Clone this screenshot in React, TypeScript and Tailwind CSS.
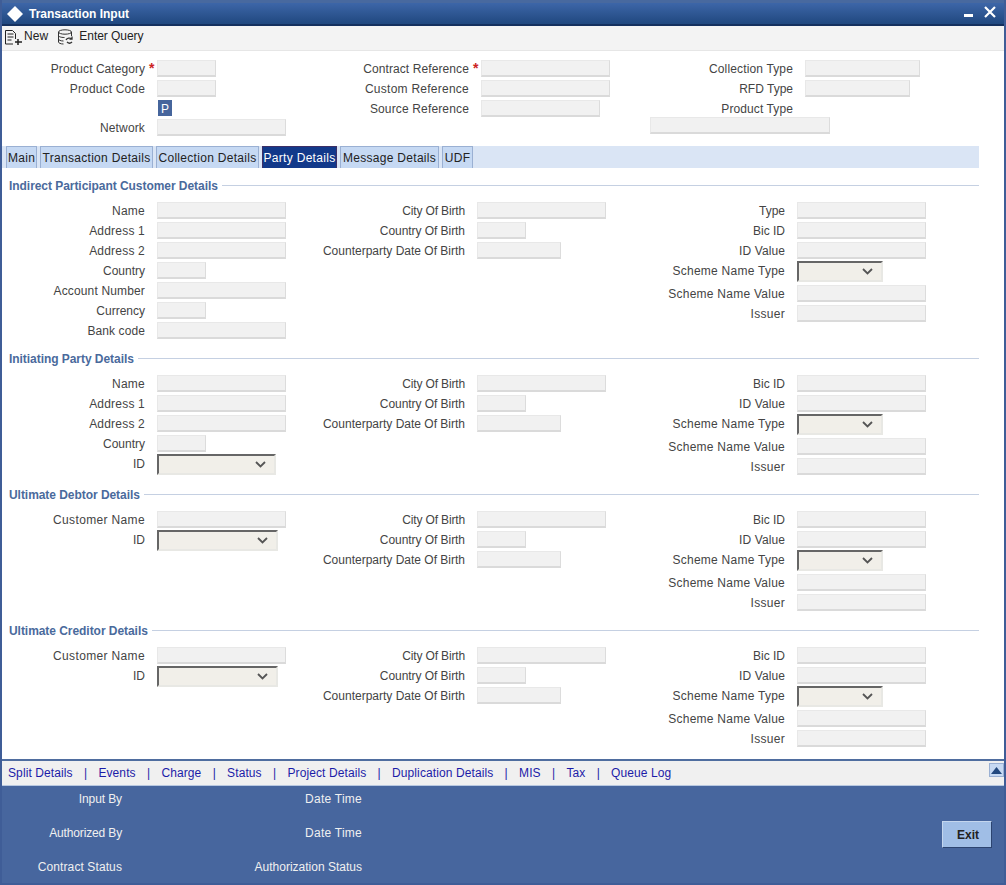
const Field = ({ w = 129 }: { w?: number }) => (
  <div
    className="h-[17px] shrink-0 bg-[#f1f1f1] border border-[#e8e8e8] border-r-[#dcdcdc] border-b-[#dadada] border-b-2"
    style={{ width: w }}
  />
);

const Select = ({ w = 86 }: { w?: number }) => (
  <div
    className="h-[21px] shrink-0 flex items-center justify-end pr-[8px] bg-[#f1efe9] border-2 border-t-[#666666] border-l-[#666666] border-r-[#e8e8e4] border-b-[#e8e8e4]"
    style={{ width: w }}
  >
    <svg width="11" height="7" viewBox="0 0 11 7" fill="none">
      <path d="M1 1l4.5 4.5L10 1" stroke="#555555" strokeWidth="1.8" />
    </svg>
  </div>
);

// nudges so label widths line up with the original's hinted Arial
const tracking: Record<string, string> = {
  Name: "tracking-[0.25px]",
  "Address 1": "tracking-[0.2px]",
  "Address 2": "tracking-[0.2px]",
  "Account Number": "tracking-[0.15px]",
  "Bank code": "tracking-[0.1px]",
  "Customer Name": "tracking-[0.35px]",
  Network: "tracking-[0.15px]",
  "Product Code": "tracking-[0.15px]",
  "Product Category": "tracking-[0.05px]",
  "Contract Reference": "tracking-[0.1px]",
  "Custom Reference": "tracking-[0.25px]",
  "Source Reference": "tracking-[0.15px]",
  "City Of Birth": "tracking-[-0.15px]",
  "Country Of Birth": "tracking-[-0.05px]",
  "ID Value": "tracking-[0.1px]",
  "Scheme Name Type": "tracking-[0.25px]",
  "Scheme Name Value": "tracking-[0.25px]",
  Issuer: "tracking-[0.3px]",
  "Collection Type": "tracking-[0.15px]",
  "Product Type": "tracking-[0.1px]",
  "Input By": "tracking-[-0.1px]",
  "Authorized By": "tracking-[-0.15px]",
  "Contract Status": "tracking-[0.1px]",
  "Date Time": "tracking-[0.25px]",
};

type RowSpec = { label: string; w?: number; select?: boolean };

const Label = ({ label, select }: { label: string; select?: boolean }) => (
  <div
    className={`w-[143px] shrink-0 text-right text-[12px] whitespace-nowrap text-[#444444] ${
      tracking[label] ?? ""
    } ${select ? "leading-[21px]" : "leading-[19px]"}`}
  >
    {label}
  </div>
);

const Row = ({ label, w, select, star }: RowSpec & { star?: boolean }) => (
  <div className={select ? "flex h-[24px] -mt-px" : "flex h-[20px]"}>
    <Label label={label} select={select} />
    <div className="w-[12px] shrink-0 text-[14px] leading-[17px] font-bold text-[#cc2222] pl-[4px]">
      {star ? "*" : ""}
    </div>
    {select ? <Select w={w} /> : <Field w={w} />}
  </div>
);

const birth: RowSpec[] = [
  { label: "City Of Birth" },
  { label: "Country Of Birth", w: 49 },
  { label: "Counterparty Date Of Birth", w: 84 },
];

const scheme: RowSpec[] = [
  { label: "Bic ID" },
  { label: "ID Value" },
  { label: "Scheme Name Type", select: true },
  { label: "Scheme Name Value" },
  { label: "Issuer" },
];

const Section = ({
  title,
  h,
  left,
  right,
}: {
  title: string;
  h: string;
  left: RowSpec[];
  right: RowSpec[];
}) => (
  <section className={h}>
    <div className="flex items-center h-[14px] mb-[10px] pl-[7px] w-[977px]">
      <span className="text-[12px] leading-[16px] pt-[2px] font-bold tracking-[-0.05px] text-[#4a6a9c] whitespace-nowrap">
        {title}
      </span>
      <div className="flex-1 h-px ml-[4px] bg-[#c5d0e2]" />
    </div>
    <div className="flex">
      {[left, birth, right].map((col, i) => (
        <div key={i} className="w-[320px] shrink-0">
          {col.map((r) => (
            <Row key={r.label} {...r} />
          ))}
        </div>
      ))}
    </div>
  </section>
);

const tabs = [
  { label: "Main", w: "w-[31px]" },
  { label: "Transaction Details", w: "w-[113px]" },
  { label: "Collection Details", w: "w-[103px]" },
  { label: "Party Details", w: "w-[75px]" },
  { label: "Message Details", w: "w-[99px]" },
  { label: "UDF", w: "w-[31px]" },
];
const links = ["Split Details", "Events", "Charge", "Status", "Project Details", "Duplication Details", "MIS", "Tax", "Queue Log"];

export default function App() {
  return (
    <div className="w-[1006px] h-[885px] flex flex-col bg-white border-x-2 border-b-2 border-[#3f5d97] overflow-hidden font-['Liberation_Sans',Arial,sans-serif]">
      {/* title bar */}
      <div className="h-[26px] shrink-0 flex items-center justify-between bg-gradient-to-b from-[#3d66a8] to-[#20487f] border-t-[3px] border-t-[#48699f] border-b-2 border-b-[#14305e]">
        <div className="flex items-center">
          <svg width="18" height="18" viewBox="0 0 18 18" className="ml-[4px] mr-[5px]">
            <path d="M9 1l8 8-8 8-8-8z" fill="#ffffff" />
          </svg>
          <span className="text-[12px] font-bold text-white">Transaction Input</span>
        </div>
        <div className="flex items-center pr-[8px]">
          <div className="w-[9px] h-[3px] mt-[3px] mr-[11px] bg-white" />
          <svg width="12" height="12" viewBox="0 0 12 12" className="-mt-[3px]">
            <path d="M1 1l10 10M11 1L1 11" stroke="#ffffff" strokeWidth="2.2" />
          </svg>
        </div>
      </div>

      {/* toolbar */}
      <div className="h-[25px] shrink-0 flex items-center pb-[4px] bg-[#f3f3f3] border-b border-[#e6e6e6] text-[12px] text-[#222222]">
        <svg width="19" height="16" viewBox="0 0 19 16" fill="none" stroke="#222222" className="ml-[2px] mr-[1px] mt-[2px]">
          <path d="M1.500 15V1.500h7l3 3V10M1.500 15H9" />
          <path d="M3.500 5h6M3.500 8h6M3.500 11h4" />
          <path d="M14 10v6M11 13h7" strokeWidth="1.500" />
        </svg>
        <span className="tracking-[0.1px]">New</span>
        <svg width="18" height="16" viewBox="0 0 18 16" fill="none" stroke="#333333" className="ml-[9px] mr-[4px] mt-[2px]">
          <ellipse cx="8" cy="3" rx="6.500" ry="2.200" />
          <path d="M1.500 3v10c0 1 2 2 5 2M14.500 3v4M1.500 6.500c0 1 2 2 6 2M1.500 10c0 1 2 2 5 2" />
          <path d="M9 11c1-2 4-2.500 6-1M15 7.500V10h-2.500M10 13c1.500 1.500 3.500 1.500 5 0" strokeWidth="1.300" />
        </svg>
        <span className="tracking-[-0.05px]">Enter Query</span>
      </div>

      {/* contract header */}
      <div className="h-[95px] shrink-0 flex pt-[9px]">
        <div className="w-[324px] shrink-0">
          <Row label="Product Category" w={59} star />
          <Row label="Product Code" w={59} />
          <div className="h-[19px] pl-[156px]">
            <div className="w-[14px] h-[16px] bg-[#46659c] text-white text-[12px] leading-[18px] text-center">P</div>
          </div>
          <Row label="Network" />
        </div>
        <div className="w-[324px] shrink-0">
          <Row label="Contract Reference" star />
          <Row label="Custom Reference" />
          <Row label="Source Reference" w={119} />
        </div>
        <div>
          <Row label="Collection Type" w={115} />
          <Row label="RFD Type" w={105} />
          <div className="h-[17px]">
            <Label label="Product Type" />
          </div>
          <Field w={180} />
        </div>
      </div>

      {/* tabs */}
      <div className="h-[22px] w-[977px] shrink-0 flex gap-[3px] pl-[4px] bg-[#dae5f5]">
        {tabs.map((t) => (
          <div
            key={t.label}
            className={`h-full ${t.w} text-center whitespace-nowrap tracking-[0.3px] text-[12px] leading-[22px] border-x border-t ${
              t.label === "Party Details"
                ? "text-white bg-[#12398a] border-[#3c2f66]"
                : "text-[#222222] bg-[#c6d9f3] border-[#9ab0d3]"
            }`}
          >
            {t.label}
          </div>
        ))}
      </div>

      {/* sections */}
      <div className="flex-1 pt-[10px]">
        <Section
          title="Indirect Participant Customer Details"
          h="h-[173px]"
          left={[
            { label: "Name" },
            { label: "Address 1" },
            { label: "Address 2" },
            { label: "Country", w: 49 },
            { label: "Account Number" },
            { label: "Currency", w: 49 },
            { label: "Bank code" },
          ]}
          right={[{ label: "Type" }, ...scheme]}
        />
        <Section
          title="Initiating Party Details"
          h="h-[136px]"
          left={[
            { label: "Name" },
            { label: "Address 1" },
            { label: "Address 2" },
            { label: "Country", w: 49 },
            { label: "ID", select: true, w: 119 },
          ]}
          right={scheme}
        />
        <Section
          title="Ultimate Debtor Details"
          h="h-[136px]"
          left={[{ label: "Customer Name" }, { label: "ID", select: true, w: 121 }]}
          right={scheme}
        />
        <Section
          title="Ultimate Creditor Details"
          h="h-[136px]"
          left={[{ label: "Customer Name" }, { label: "ID", select: true, w: 121 }]}
          right={scheme}
        />
      </div>

      {/* sub-screen links */}
      <div className="h-[27px] shrink-0 flex items-center justify-between bg-[#f0f0f0] border-t-2 border-t-[#4f6d9f] border-b border-b-[#b8c8e0] pl-[6px] text-[12px] text-[#1c1ca8]">
        <div className="flex items-center tracking-[0.1px]">
          {links.map((l, i) => (
            <span key={l} className="flex items-center">
              {i > 0 && <span className="mx-[11.25px]">|</span>}
              {l}
            </span>
          ))}
        </div>
        <div className="w-[15px] h-[14px] mb-[6px] flex items-center justify-center bg-[#c6d9f3] border border-[#9ab0d3]">
          <svg width="11" height="7" viewBox="0 0 11 7">
            <path d="M5.500 0L11 7H0z" fill="#23497f" />
          </svg>
        </div>
      </div>

      {/* audit footer */}
      <div className="h-[97px] shrink-0 flex items-center justify-between bg-[#47669e] pr-[12px] text-[12px] text-[#f0f0f0]">
        <div className="flex flex-col gap-[20px] w-[360px] pb-[4px]">
          {[
            ["Input By", "Date Time"],
            ["Authorized By", "Date Time"],
            ["Contract Status", "Authorization Status"],
          ].map(([a, b]) => (
            <div key={a} className="flex h-[14px] leading-[14px]">
              <div className={`w-[120px] text-right ${tracking[a] ?? ""}`}>{a}</div>
              <div className={`w-[240px] text-right ${tracking[b] ?? ""}`}>{b}</div>
            </div>
          ))}
        </div>
        <button className="w-[50px] h-[27px] pl-[2px] bg-[#a0bee6] border border-t-[#c4d6ee] border-l-[#c4d6ee] border-r-[#2c4470] border-b-[#2c4470] text-[12px] font-bold text-[#222222]">
          Exit
        </button>
      </div>
    </div>
  );
}
